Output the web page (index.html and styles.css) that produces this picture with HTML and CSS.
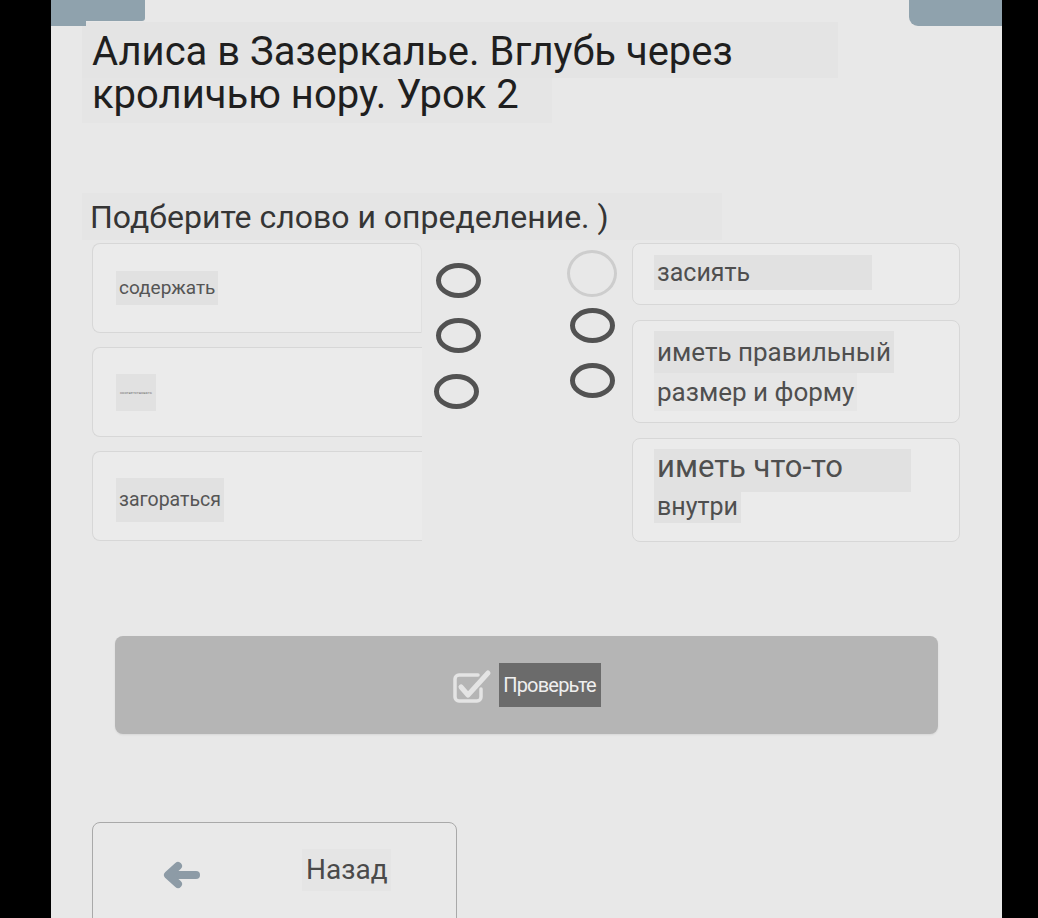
FILE: index.html
```html
<!DOCTYPE html>
<html lang="ru">
<head>
<meta charset="utf-8">
<title>Алиса в Зазеркалье</title>
<link rel="stylesheet" href="styles.css">
</head>
<body>
<div class="frame">
  <div class="side side-left"></div>
  <main class="screen">
    <div class="topbar">
      <div class="tab-left">
        <div class="tab-left-main"></div>
        <div class="tab-left-strip"></div>
      </div>
      <div class="tab-right"></div>
    </div>

    <h1 class="title">
      <span class="t1">Алиса в Зазеркалье. Вглубь через</span>
      <span class="t2">кроличью нору. Урок 2</span>
    </h1>

    <p class="task">Подберите слово и определение. )</p>

    <section class="match">
      <div class="lcol">
        <div class="lcard"><span class="hl ltext">содержать</span></div>
        <div class="lcard"><span class="hl tiny">соответствовать</span></div>
        <div class="lcard"><span class="hl ltext l3">загораться</span></div>
      </div>
      <div class="dots dots-left">
        <span class="oval"></span>
        <span class="oval o2"></span>
        <span class="oval o3"></span>
      </div>
      <div class="dots dots-right">
        <span class="ring"></span>
        <span class="oval r2"></span>
        <span class="oval r3"></span>
      </div>
      <div class="rcol">
        <div class="rcard rc1"><span class="hl r-one">засиять</span></div>
        <div class="rcard rc2">
          <span class="hl r-a">иметь правильный</span>
          <span class="hl r-b">размер и форму</span>
        </div>
        <div class="rcard rc3">
          <span class="hl r-c">иметь что-то</span>
          <span class="hl r-d">внутри</span>
        </div>
      </div>
    </section>

    <button class="check" type="button">
      <svg class="check-icon" width="40" height="34" viewBox="0 0 40 34" aria-hidden="true">
        <path d="M26 6 H7 a4 4 0 0 0 -4 4 V28 a4 4 0 0 0 4 4 H25 a4 4 0 0 0 4 -4 V20" fill="none" stroke="#e4e4e4" stroke-width="3.5" stroke-linecap="round" stroke-linejoin="round"/>
        <path d="M9 18 L16 26 L36 4" fill="none" stroke="#e4e4e4" stroke-width="5" stroke-linecap="round" stroke-linejoin="round"/>
      </svg>
      <span class="check-label">Проверьте</span>
    </button>

    <button class="back" type="button">
      <svg class="back-icon" width="38" height="28" viewBox="0 0 38 28" aria-hidden="true">
        <path d="M10 14 H33" stroke="#8d9ba6" stroke-width="8" stroke-linecap="round"/>
        <path d="M15 5 L5 14 L15 23" fill="none" stroke="#8d9ba6" stroke-width="8" stroke-linecap="round" stroke-linejoin="round"/>
      </svg>
      <span class="back-label">Назад</span>
    </button>
  </main>
  <div class="side side-right"></div>
</div>
</body>
</html>
```
FILE: styles.css
```css
html, body {
  margin: 0;
  padding: 0;
  height: 918px;
  overflow: hidden;
  background: #000;
}

.frame {
  display: flex;
  width: 1038px;
  height: 918px;
}

.side-left { width: 51px; background: #000; flex: none; }
.side-right { width: 36px; background: #000; flex: none; }

.screen {
  width: 951px;
  flex: none;
  background: #e8e8e8;
  font-family: Roboto, "Noto Sans", sans-serif;
  overflow: hidden;
}

/* top tabs */
.topbar {
  height: 22px;
  display: flex;
  justify-content: space-between;
  align-items: flex-start;
}
.tab-left { display: flex; flex-direction: column; }
.tab-left-main { width: 94px; height: 21px; background: #8fa2ad; border-bottom-right-radius: 3px; }
.tab-left-strip { width: 35px; height: 5px; background: #8fa2ad; }
.tab-right {
  width: 93px;
  height: 26px;
  background: #8fa2ad;
  border-bottom-left-radius: 9px;
}

/* title */
.title {
  margin: 0 0 0 31px;
  font-weight: 400;
  font-size: 40px;
  color: #1f1f1f;
}
.title .t1 {
  display: block;
  width: 746px;
  padding: 8px 0 5px 10px;
  line-height: 43px;
  background: #e4e4e4;
}
.title .t2 {
  display: block;
  width: 460px;
  padding: 0 0 12px 10px;
  line-height: 33px;
  background: #e5e5e5;
}

.task {
  margin: 70px 0 0 31px;
  width: 632px;
  padding: 4px 0 3px 8px;
  font-size: 32px;
  line-height: 40px;
  color: #353535;
  background: #e5e5e5;
}

/* matching area */
.match {
  margin: 3px 0 0 41px;
  display: flex;
  align-items: flex-start;
}

.lcol {
  width: 330px;
  display: flex;
  flex-direction: column;
  gap: 14px;
}
.lcard {
  height: 90px;
  box-sizing: border-box;
  border: 1.5px solid #d7d7d7;
  border-right: none;
  border-radius: 8px 0 0 8px;
  background: #ebebeb;
  display: flex;
  align-items: center;
  padding-left: 23px;
}
.lcard:first-child {
  border-right: 1.5px solid #e0e0e0;
  border-radius: 8px 8px 0 8px;
}

.hl {
  background: #e1e1e1;
  padding: 0 3px;
}
.ltext {
  font-size: 19px;
  line-height: 34px;
  color: #555;
}
.l3 { font-size: 19.5px; line-height: 44px; margin-top: 8px; }
.tiny {
  font-size: 4px;
  line-height: 37px;
  color: #777;
  padding: 0 4px;
}

.dots {
  display: flex;
  flex-direction: column;
  align-items: center;
}
.dots-left {
  width: 46px;
  margin-left: 13px;
  padding-top: 20px;
}
.dots-right {
  width: 50px;
  margin-left: 86px;
  padding-top: 7px;
}

.oval {
  display: block;
  width: 45px;
  height: 35px;
  box-sizing: border-box;
  border: 5.5px solid #525252;
  border-radius: 50%;
}
.o2 { margin-top: 20px; }
.o3 { margin-top: 21px; margin-right: 3px; }

.ring {
  display: block;
  width: 50px;
  height: 47px;
  box-sizing: border-box;
  border: 3px solid #cdcdcd;
  border-radius: 50%;
}
.r2 { margin-top: 11px; }
.r3 { margin-top: 20px; }

.rcol {
  width: 328px;
  margin-left: 15px;
  display: flex;
  flex-direction: column;
  gap: 15px;
}
.rcard {
  box-sizing: border-box;
  border: 1.5px solid #d7d7d7;
  border-radius: 8px;
  background: #ebebeb;
  padding-left: 21px;
  color: #4f4f4f;
  display: flex;
  flex-direction: column;
  align-items: flex-start;
}
.rc1 { height: 62px; padding-top: 11px; }
.rc2 { height: 103px; padding-top: 10px; }
.rc3 { height: 104px; padding-top: 10px; }

.r-one { width: 212px; font-size: 25px; line-height: 35px; }
.r-a { font-size: 26px; line-height: 42px; }
.r-b { font-size: 26px; line-height: 38px; background: #e6e6e6; }
.r-c { width: 251px; font-size: 31px; line-height: 35px; padding-bottom: 8px; }
.r-d { font-size: 25px; line-height: 33px; margin-top: -2px; }

/* check button */
.check {
  display: flex;
  align-items: center;
  justify-content: center;
  gap: 7px;
  width: 823px;
  height: 98px;
  margin: 94px 0 0 64px;
  padding: 0;
  border: none;
  border-radius: 8px;
  background: #b5b5b5;
  box-shadow: 0 1px 2px rgba(0,0,0,0.08);
  font-family: Roboto, "Noto Sans", sans-serif;
}
.check-icon { display: block; margin-top: 1px; }
.check-label {
  display: block;
  background: #6b6b6b;
  color: #efefef;
  font-size: 20px;
  letter-spacing: -0.8px;
  line-height: 44px;
  padding: 0 5px 0 4px;
}

/* back button */
.back {
  display: flex;
  align-items: flex-start;
  width: 365px;
  height: 120px;
  margin: 88px 0 0 41px;
  padding: 37px 0 0 70px;
  box-sizing: border-box;
  border: 1.5px solid #a9a9a9;
  border-radius: 8px;
  background: #e9e9e9;
  font-family: Roboto, "Noto Sans", sans-serif;
}
.back-icon { display: block; margin-top: 1px; }
.back-label {
  display: block;
  margin: -11px 0 0 101px;
  padding: 0 3px 0 4px;
  font-size: 28px;
  line-height: 42px;
  color: #4a4a4a;
  background: #e5e5e5;
}
```
